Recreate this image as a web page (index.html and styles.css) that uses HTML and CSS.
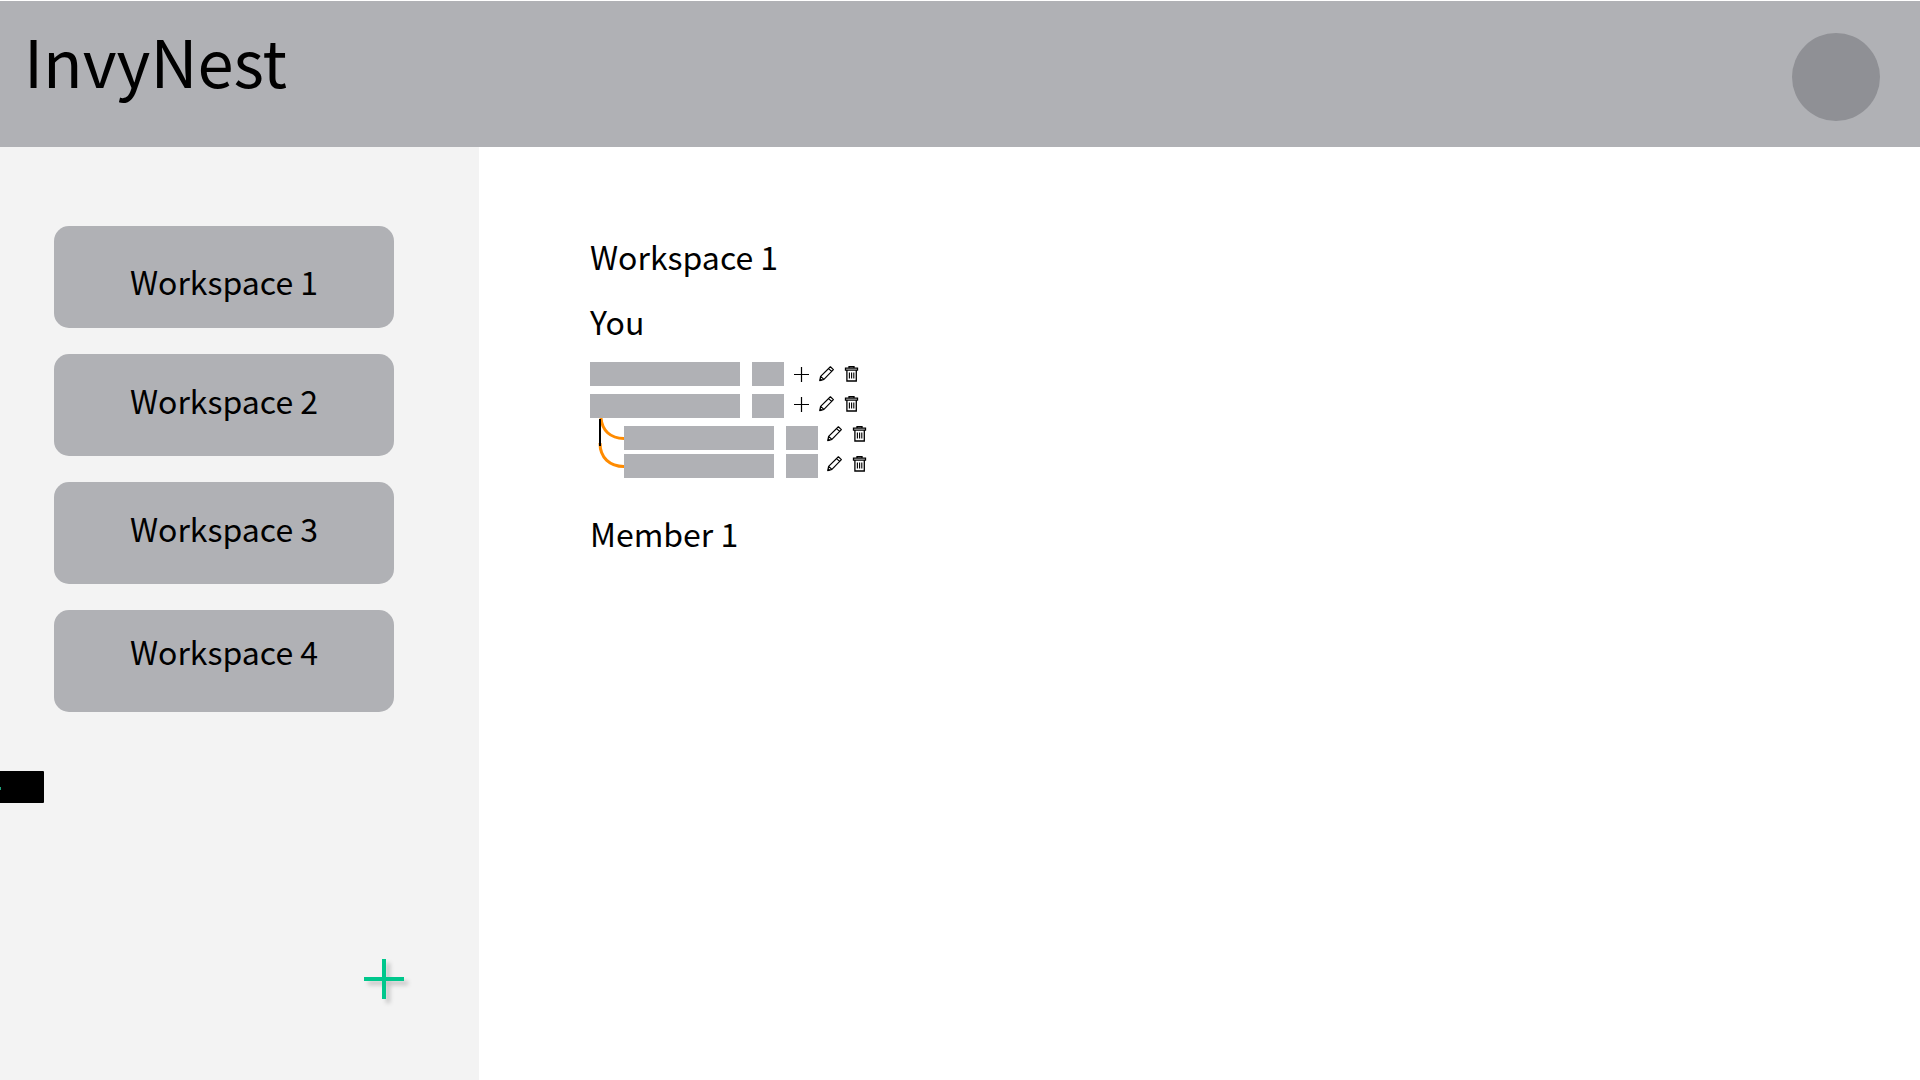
FILE: index.html
```html
<!DOCTYPE html>
<html lang="en">
<head>
  <meta charset="utf-8">
  <meta name="viewport" content="width=device-width, initial-scale=1">
  <title>InvyNest</title>
  <link rel="stylesheet" href="styles.css">
</head>
<body>
  <svg class="sprite" aria-hidden="true">
    <symbol id="icon-plus" viewBox="0 0 16 16">
      <path d="M7.5 1v15M0 8.500h15" fill="none" stroke="#000" stroke-width="1.2"/>
    </symbol>
    <symbol id="icon-pencil" viewBox="0 0 16 16">
      <path d="M.8 14.6 1.6 10.4 11.4.8 14.4 3.6 4.9 13.4ZM1.6 10.4 4.9 13.4M9.6 2.6 12.6 5.4" fill="none" stroke="#000" stroke-width="1.2" stroke-linejoin="round"/>
      <path d="M.5 15 1.1 12 3.4 14.2Z"/>
    </symbol>
    <symbol id="icon-trash" viewBox="0 0 16 16">
      <path d="M5 1.900V.7h5v1.200M1.5 2.200h12v2H1.500ZM2.900 4.200V15h9.400V4.200" fill="none" stroke="#000" stroke-width="1.3"/>
      <path d="M5.400 6.500v6M7.600 6.500v6M9.800 6.500v6" fill="none" stroke="#000" stroke-width="1.1"/>
    </symbol>
  </svg>

  <header class="topbar">
    <h1 class="brand">InvyNest</h1>
    <button class="avatar" type="button" aria-label="Account"></button>
  </header>

  <div class="layout">
    <aside class="sidebar">
      <nav class="workspaces" aria-label="Workspaces">
        <button class="workspace workspace--low" type="button">Workspace 1</button>
        <button class="workspace" type="button">Workspace 2</button>
        <button class="workspace" type="button">Workspace 3</button>
        <button class="workspace workspace--high" type="button">Workspace 4</button>
      </nav>
      <div class="tag"></div>
      <button class="add" type="button" aria-label="Add workspace">
        <svg class="add-icon" viewBox="0 0 40 40"><path d="M20 0v40M0 20h40" fill="none" stroke="#00c78c" stroke-width="4"/></svg>
      </button>
    </aside>

    <main class="content">
      <h2 class="heading">Workspace 1</h2>
      <h3 class="heading">You</h3>
      <div class="tree">
        <ul class="items">
          <li class="item"><span class="name"></span><span class="count"></span></li>
          <li class="item"><span class="name"></span><span class="count"></span></li>
          <li class="branch">
            <svg class="links" viewBox="0 0 34 60" fill="none" aria-hidden="true">
              <path d="M11 0C12 12 20 20.500 34 20.500M10 25C10 40 20 48.500 34 48.500" stroke="#ff8b00" stroke-width="3"/>
              <path d="M10 1v27" stroke="#000" stroke-width="2"/>
            </svg>
            <ul class="subitems">
              <li class="item"><span class="name"></span><span class="count"></span></li>
              <li class="item"><span class="name"></span><span class="count"></span></li>
            </ul>
          </li>
        </ul>
        <div class="actions">
          <div class="action-row">
            <button class="action" type="button" aria-label="Add"><svg class="icon"><use href="#icon-plus"/></svg></button>
            <button class="action" type="button" aria-label="Edit"><svg class="icon"><use href="#icon-pencil"/></svg></button>
            <button class="action" type="button" aria-label="Delete"><svg class="icon"><use href="#icon-trash"/></svg></button>
          </div>
          <div class="action-row">
            <button class="action" type="button" aria-label="Add"><svg class="icon"><use href="#icon-plus"/></svg></button>
            <button class="action" type="button" aria-label="Edit"><svg class="icon"><use href="#icon-pencil"/></svg></button>
            <button class="action" type="button" aria-label="Delete"><svg class="icon"><use href="#icon-trash"/></svg></button>
          </div>
          <div class="action-row action-row--nested">
            <button class="action" type="button" aria-label="Edit"><svg class="icon"><use href="#icon-pencil"/></svg></button>
            <button class="action" type="button" aria-label="Delete"><svg class="icon"><use href="#icon-trash"/></svg></button>
          </div>
          <div class="action-row action-row--nested">
            <button class="action" type="button" aria-label="Edit"><svg class="icon"><use href="#icon-pencil"/></svg></button>
            <button class="action" type="button" aria-label="Delete"><svg class="icon"><use href="#icon-trash"/></svg></button>
          </div>
        </div>
      </div>
      <h3 class="heading">Member 1</h3>
    </main>
  </div>
</body>
</html>
```
FILE: styles.css
```css
* {
  box-sizing: border-box;
}

body {
  margin: 0;
  min-height: 100vh;
  display: flex;
  flex-direction: column;
  background: #fff;
  color: #000;
  font-family: "Noto Sans CJK SC", "Noto Sans CJK JP", sans-serif;
  font-size: 32px;
  line-height: 48px;
}

button {
  border: 0;
  padding: 0;
  background: none;
  color: inherit;
  font: inherit;
  cursor: pointer;
}

.sprite {
  display: none;
}

.topbar {
  display: flex;
  justify-content: space-between;
  align-items: flex-start;
  border-top: 1px solid #fff;
  padding: 11px 40px 26px 24px;
  background: #b0b1b5;
}

.brand {
  margin: 0;
  font-size: 65px;
  font-weight: 400;
  line-height: 96px;
}

.avatar {
  width: 88px;
  height: 88px;
  margin-top: 21px;
  border-radius: 50%;
  background: #8f9095;
}

.layout {
  flex: 1;
  display: flex;
}

.sidebar {
  flex: 0 0 479px;
  display: flex;
  flex-direction: column;
  padding: 79px 0 81px;
  background: #f3f3f3;
}

.workspaces {
  display: flex;
  flex-direction: column;
  gap: 26px;
  padding: 0 85px 0 54px;
}

.workspace {
  padding: 22px 16px 32px;
  border-radius: 15px;
  background: #b0b1b5;
}

.workspace--low {
  padding: 31px 16px 23px;
}

.workspace--high {
  padding: 17px 16px 37px;
}

.tag {
  width: 44px;
  height: 32px;
  margin-top: 59px;
  border-radius: 0 1px 1px 0;
  background: linear-gradient(#1fa37c, #1fa37c) 0 16px / 1px 3px no-repeat #000;
}

.add {
  align-self: flex-end;
  width: 40px;
  height: 40px;
  margin: auto 75px 0 0;
}

.add-icon {
  display: block;
  width: 40px;
  height: 40px;
  overflow: visible;
  filter: drop-shadow(4px 4px 2px rgba(0, 0, 0, 0.2));
}

.content {
  flex: 1;
  display: flex;
  flex-direction: column;
  gap: 17px;
  padding: 85px 40px 40px 111px;
}

.heading {
  margin: 0;
  font-size: 32px;
  font-weight: 400;
}

.tree {
  display: flex;
  gap: 10px;
  margin-bottom: 14px;
}

.items,
.subitems {
  display: flex;
  flex-direction: column;
  margin: 0;
  padding: 0;
  list-style: none;
}

.items {
  width: 194px;
  gap: 8px;
}

.subitems {
  gap: 4px;
}

.branch {
  position: relative;
  padding-left: 34px;
}

.links {
  position: absolute;
  left: 0;
  bottom: 0;
  width: 34px;
  height: 60px;
}

.item {
  display: flex;
  gap: 12px;
}

.name,
.count {
  flex: none;
  height: 24px;
  background: #b0b1b5;
}

.name {
  width: 150px;
}

.count {
  width: 32px;
}

.actions {
  display: flex;
  flex-direction: column;
  gap: 14px;
  padding-top: 4px;
}

.action-row {
  display: flex;
  gap: 9px;
}

.action-row--nested {
  padding-left: 33px;
}

.action,
.icon {
  display: block;
  width: 16px;
  height: 16px;
}
```
